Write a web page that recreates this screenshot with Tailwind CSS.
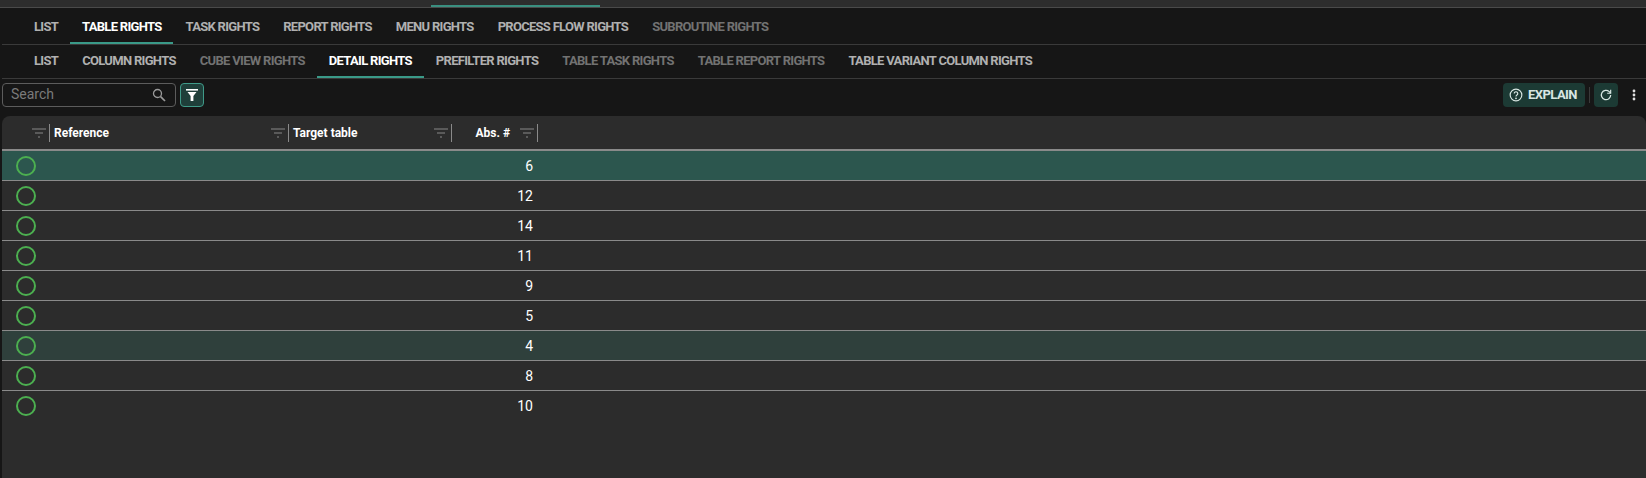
<!DOCTYPE html>
<html><head><meta charset="utf-8"><script src="https://cdn.jsdelivr.net/npm/@tailwindcss/browser@4"></script></head>
<body class="bg-[#161616] font-['Roboto',sans-serif] w-[1646px] h-[478px] overflow-hidden">
<div class="h-[8px] bg-[#2d2d2d] border-b border-[#4a4a4a] pl-[431px]"><div class="w-[169px] h-[7px] border-b-2 border-[#3a8f80]"></div></div>
<div class="ml-[2px] h-[37px] border-b border-[#3a3a3a] flex pl-[20px] text-[13px] font-bold tracking-[-0.71px] text-[#b0b0b0]">
<div class="px-3 h-[36px] leading-[37px]">LIST</div>
<div class="px-3 h-[36px] leading-[37px] text-white border-b-2 border-[#3a9a88]">TABLE RIGHTS</div>
<div class="px-3 h-[36px] leading-[37px]">TASK RIGHTS</div>
<div class="px-3 h-[36px] leading-[37px]">REPORT RIGHTS</div>
<div class="px-3 h-[36px] leading-[37px]">MENU RIGHTS</div>
<div class="px-3 h-[36px] leading-[37px]">PROCESS FLOW RIGHTS</div>
<div class="px-3 h-[36px] leading-[37px] text-[#727272]">SUBROUTINE RIGHTS</div>
</div>
<div class="ml-[2px] h-[34px] border-b border-[#3a3a3a] flex pl-[20px] text-[13px] font-bold tracking-[-0.69px] text-[#b0b0b0]">
<div class="px-3 h-[33px] leading-[32px]">LIST</div>
<div class="px-3 h-[33px] leading-[32px]">COLUMN RIGHTS</div>
<div class="px-3 h-[33px] leading-[32px] text-[#727272]">CUBE VIEW RIGHTS</div>
<div class="px-3 h-[33px] leading-[32px] text-white border-b-2 border-[#3a9a88]">DETAIL RIGHTS</div>
<div class="px-3 h-[33px] leading-[32px]">PREFILTER RIGHTS</div>
<div class="px-3 h-[33px] leading-[32px] text-[#727272]">TABLE TASK RIGHTS</div>
<div class="px-3 h-[33px] leading-[32px] text-[#727272]">TABLE REPORT RIGHTS</div>
<div class="px-3 h-[33px] leading-[32px]">TABLE VARIANT COLUMN RIGHTS</div>
</div>
<div class="h-[37px] flex items-center pl-[2px] pb-[5px]">
<div class="w-[174px] h-[24px] border border-[#5c5c5c] rounded-[4px] flex items-center justify-between pl-[8px] pr-[9px] text-[14px] text-[#7a7a7a]"><span class="mt-[-2px]">Search</span>
<svg width="14" height="14" viewBox="0 0 14 14" fill="none" stroke="#9a9a9a" stroke-width="1.3"><circle cx="5.5" cy="5.5" r="4"/><path d="M8.6 8.6L13 13" stroke-width="1.7"/></svg></div>
<div class="ml-[4px] w-[24px] h-[24px] rounded-[4px] border border-[#3f9a88] bg-[#1f3f3a] flex items-center justify-center">
<svg width="14" height="14" viewBox="0 0 14 14" fill="#fff"><rect x="1" y="1" width="12" height="1.6"/><path d="M2.5 4h9L8.4 8v5H5.6V8z"/></svg></div>
<div class="ml-auto h-[24px] w-[82px] rounded-[4px] bg-[#1c3a34] flex items-center pl-[6px] gap-[5px] text-[13px] font-bold tracking-[-0.55px] text-[#d8e6e2]">
<svg width="14" height="14" viewBox="0 0 24 24" fill="none" stroke="#d8e6e2" stroke-width="2"><circle cx="12" cy="12" r="10"/><path d="M9 9.5a3 3 0 1 1 4.6 2.5c-1 .7-1.6 1.3-1.6 2.5"/><circle cx="12" cy="17.7" r=".6" fill="#d8e6e2"/></svg>EXPLAIN</div>
<div class="w-px h-[16px] bg-[#3a3a3a] mx-[4px]"></div>
<div class="w-[24px] h-[24px] rounded-[4px] bg-[#1c3a34] flex items-center justify-center">
<svg width="14" height="14" viewBox="0 0 24 24" fill="none" stroke="#d8e6e2" stroke-width="2.2"><path d="M20 12a8 8 0 1 1-2.5-5.8L20 8.5"/><path d="M20 3v6h-6" stroke-width="2"/></svg></div>
<div class="ml-[4px] w-[24px] flex justify-center"><svg width="4" height="12" viewBox="0 0 4 12" fill="#e0e0e0"><circle cx="2" cy="2" r="1.4"/><circle cx="2" cy="6" r="1.4"/><circle cx="2" cy="10" r="1.4"/></svg></div>
</div>
<div class="ml-[2px] h-[362px] bg-[#2c2c2c] rounded-t-[8px] overflow-hidden">
<div class="h-[33px] flex items-center text-[12px] font-bold text-white">
<div class="w-[48px] flex justify-end items-center h-[18px] border-r border-[#8a8a8a] pr-[3px]"><svg width="14" height="10" viewBox="0 0 14 10" fill="none" stroke="#6a6a6a" stroke-width="1.4"><path d="M0 1h14M3 5h8M6 9h2"/></svg></div>
<div class="w-[239px] pl-[4px] pr-[3px] flex justify-between items-center h-[18px] border-r border-[#8a8a8a]"><span>Reference</span><svg width="14" height="10" viewBox="0 0 14 10" fill="none" stroke="#6a6a6a" stroke-width="1.4"><path d="M0 1h14M3 5h8M6 9h2"/></svg></div>
<div class="w-[163px] pl-[4px] pr-[3px] flex justify-between items-center h-[18px] border-r border-[#8a8a8a]"><span>Target table</span><svg width="14" height="10" viewBox="0 0 14 10" fill="none" stroke="#6a6a6a" stroke-width="1.4"><path d="M0 1h14M3 5h8M6 9h2"/></svg></div>
<div class="w-[86px] pr-[3px] flex justify-end gap-[10px] items-center h-[18px] border-r border-[#8a8a8a]"><span>Abs. #</span><svg width="14" height="10" viewBox="0 0 14 10" fill="none" stroke="#6a6a6a" stroke-width="1.4"><path d="M0 1h14M3 5h8M6 9h2"/></svg></div>
</div>
<div class="border-t-2 border-[#8a8a8a] text-[14px] text-white">
<div class="h-[30px] bg-[#2c564e] border-b border-[#8a8a8a] flex items-center"><div class="w-[48px] pl-[14px]"><div class="size-[20px] rounded-full border-2 border-[#4caf50]"></div></div><div class="w-[483px] pt-[1px] text-right">6</div></div>
<div class="h-[30px] border-b border-[#8a8a8a] flex items-center"><div class="w-[48px] pl-[14px]"><div class="size-[20px] rounded-full border-2 border-[#4caf50]"></div></div><div class="w-[483px] pt-[1px] text-right">12</div></div>
<div class="h-[30px] border-b border-[#8a8a8a] flex items-center"><div class="w-[48px] pl-[14px]"><div class="size-[20px] rounded-full border-2 border-[#4caf50]"></div></div><div class="w-[483px] pt-[1px] text-right">14</div></div>
<div class="h-[30px] border-b border-[#8a8a8a] flex items-center"><div class="w-[48px] pl-[14px]"><div class="size-[20px] rounded-full border-2 border-[#4caf50]"></div></div><div class="w-[483px] pt-[1px] text-right">11</div></div>
<div class="h-[30px] border-b border-[#8a8a8a] flex items-center"><div class="w-[48px] pl-[14px]"><div class="size-[20px] rounded-full border-2 border-[#4caf50]"></div></div><div class="w-[483px] pt-[1px] text-right">9</div></div>
<div class="h-[30px] border-b border-[#8a8a8a] flex items-center"><div class="w-[48px] pl-[14px]"><div class="size-[20px] rounded-full border-2 border-[#4caf50]"></div></div><div class="w-[483px] pt-[1px] text-right">5</div></div>
<div class="h-[30px] bg-[#2f403c] border-b border-[#8a8a8a] flex items-center"><div class="w-[48px] pl-[14px]"><div class="size-[20px] rounded-full border-2 border-[#4caf50]"></div></div><div class="w-[483px] pt-[1px] text-right">4</div></div>
<div class="h-[30px] border-b border-[#8a8a8a] flex items-center"><div class="w-[48px] pl-[14px]"><div class="size-[20px] rounded-full border-2 border-[#4caf50]"></div></div><div class="w-[483px] pt-[1px] text-right">8</div></div>
<div class="h-[30px] flex items-center"><div class="w-[48px] pl-[14px]"><div class="size-[20px] rounded-full border-2 border-[#4caf50]"></div></div><div class="w-[483px] pt-[1px] text-right">10</div></div>
</div>
</div>
</body></html>
